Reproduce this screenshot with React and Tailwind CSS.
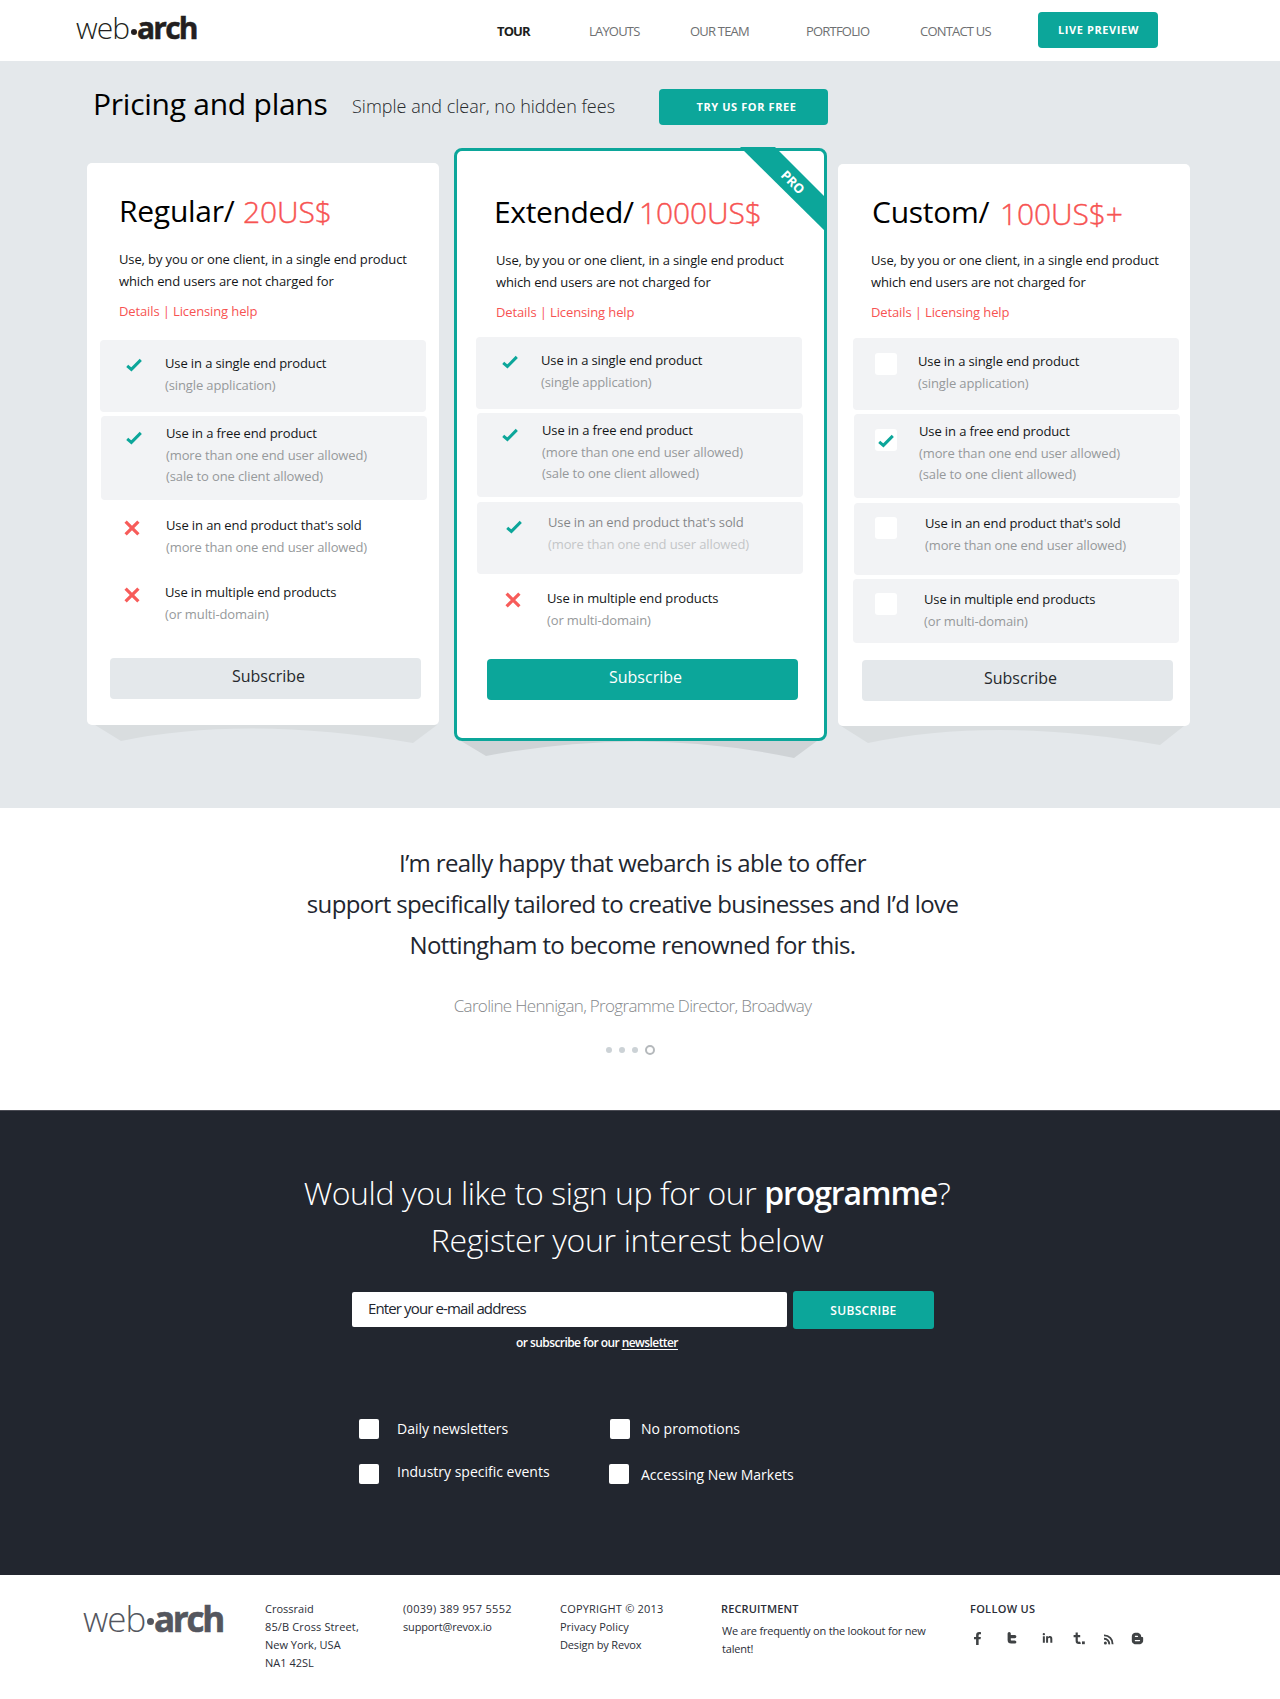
import { FaFacebookF, FaLinkedinIn, FaBloggerB } from "react-icons/fa";

const NAV = ["LAYOUTS", "OUR TEAM", "PORTFOLIO", "CONTACT US"];

const FEATURES = [
  ["Use in a single end product", "(single application)"],
  ["Use in a free end product", "(more than one end user allowed)", "(sale to one client allowed)"],
  ["Use in an end product that's sold", "(more than one end user allowed)"],
  ["Use in multiple end products", "(or multi-domain)"],
];

const PLANS = [
  {
    name: "Regular/",
    price: "20US$",
    card: "mt-4 w-[352px] h-[562px] rounded-[5px] pt-7",
    head: "pl-[32px]",
    title: "w-[124px] tracking-[-0.25px]",
    priceBox: "mt-px",
    desc: "ml-[32px]",
    list: "mt-[18px]",
    rows: [
      { box: "ml-[13px] h-[72px] bg-[#f2f3f5]", icon: "check", at: "w-[65px] pl-[26px] pt-[18px]", text: "pt-3" },
      { box: "ml-[14px] mt-1 h-[84px] bg-[#f2f3f5]", icon: "check", at: "w-[65px] pl-[25px] pt-[15px]", text: "pt-1.5" },
      { box: "ml-[14px] mt-1 h-[67px]", icon: "cross", at: "w-[65px] pl-[23px] pt-4", text: "pt-2.5" },
      { box: "ml-[13px] h-[60px]", icon: "cross", at: "w-[65px] pl-[24px] pt-4", text: "pt-2.5" },
    ],
    button: "ml-[23px] mt-[27px] bg-[#e4e8eb] text-[#26292b]",
    shadow: { cls: "left-0", d: "M8 0 L34 16 Q158 -10 326 18 L350 0 Z", fill: "#d9dddf" },
  },
  {
    name: "Extended/",
    price: "1000US$",
    featured: true,
    card: "ml-[15px] mt-px w-[373px] h-[593px] rounded-[8px] border-3 border-[#0ca69a] pt-[41px]",
    head: "pl-[37px]",
    title: "w-[145px] tracking-[-0.35px]",
    priceBox: "mt-px",
    desc: "ml-[39px]",
    list: "mt-[14px]",
    rows: [
      { box: "ml-[19px] h-[72px] bg-[#f2f3f5]", icon: "check", at: "w-[65px] pl-[26px] pt-[18px]", text: "pt-3" },
      { box: "ml-[20px] mt-1 h-[84px] bg-[#f2f3f5]", icon: "check", at: "w-[65px] pl-[25px] pt-[15px]", text: "pt-1.5" },
      { box: "ml-[20px] mt-[5px] h-[72px] bg-[#f2f3f5]", icon: "check", at: "w-[71px] pl-[29px] pt-[18px]", text: "pt-[9px] opacity-50" },
      { box: "ml-[20px] mt-1 h-[60px]", icon: "cross", at: "w-[70px] pl-[28px] pt-[14px]", text: "pt-[9px]" },
    ],
    button: "ml-[30px] mt-[21px] bg-[#0ca69a] text-white",
    shadow: { cls: "-left-[4px]", d: "M8 3 L33 18 Q190 -12 341 20 L364 3 Z", fill: "#cfd3d6" },
  },
  {
    name: "Custom/",
    price: "100US$+",
    card: "ml-[11px] mt-[17px] w-[352px] h-[562px] rounded-[5px] pt-7",
    head: "pl-[34px]",
    title: "w-[128px] tracking-[-0.25px]",
    priceBox: "mt-0.5",
    desc: "ml-[33px]",
    list: "mt-[15px]",
    rows: [
      { box: "ml-[15px] h-[72px] bg-[#f2f3f5]", icon: "box", at: "w-[65px] pl-[22px] pt-[15px]", text: "pt-3" },
      { box: "ml-[16px] mt-1 h-[84px] bg-[#f2f3f5]", icon: "checkedBox", at: "w-[65px] pl-[21px] pt-[15px]", text: "pt-1.5" },
      { box: "ml-[16px] mt-[5px] h-[72px] bg-[#f2f3f5]", icon: "box", at: "w-[71px] pl-[21px] pt-[14px]", text: "pt-[9px]" },
      { box: "ml-[15px] mt-1 h-[64px] bg-[#f2f3f5]", icon: "box", at: "w-[71px] pl-[22px] pt-[14px]", text: "pt-[9px]" },
    ],
    button: "ml-[24px] mt-[17px] bg-[#e4e8eb] text-[#26292b]",
    shadow: { cls: "left-0", d: "M3 0 L30 17 Q158 -10 322 19 L346 0 Z", fill: "#d9dddf" },
  },
];

function Check() {
  return (
    <svg width="16" height="14" viewBox="0 0 16 14" fill="none">
      <path d="M1.2 7.8 L5.4 11.4 L14.8 1.9" stroke="#0ca69a" strokeWidth="3" />
    </svg>
  );
}

function Cross() {
  return (
    <svg width="16" height="16" viewBox="0 0 16 16" fill="none">
      <path d="M1.6 1.6 L14.4 14.4 M14.4 1.6 L1.6 14.4" stroke="#f75c5a" strokeWidth="3.2" />
    </svg>
  );
}

function Marker({ kind }) {
  if (kind === "check") return <Check />;
  if (kind === "cross") return <Cross />;
  return (
    <div className="h-[22px] w-[22px] rounded-[3px] bg-white pl-[3px] pt-[5px]">
      {kind === "checkedBox" && <Check />}
    </div>
  );
}

function Plan({ plan }) {
  return (
    <article className={`relative shrink-0 bg-white ${plan.card}`}>
      <div className={`flex h-10 text-[30px] leading-10 whitespace-nowrap ${plan.head}`}>
        <h2 className={`shrink-0 text-black ${plan.title}`}>{plan.name}</h2>
        <span className={`font-light tracking-[-0.1px] text-[#f75352] [-webkit-text-stroke:0.4px_#f75352] ${plan.priceBox}`}>{plan.price}</span>
      </div>
      <div className={`text-[13px] leading-[22px] tracking-[-0.12px] whitespace-nowrap ${plan.desc}`}>
        <p className="mt-[17px] text-[#141618]">
          Use, by you or one client, in a single end product
          <br />
          which end users are not charged for
        </p>
        <p className="mt-2 text-[#f75352]">Details | Licensing help</p>
      </div>
      <ul className={plan.list}>
        {plan.rows.map((row, i) => (
          <li key={i} className={`flex w-[326px] rounded-[4px] ${row.box}`}>
            <div className={`shrink-0 ${row.at}`}>
              <Marker kind={row.icon} />
            </div>
            <div className={`text-[13px] leading-[22px] tracking-[-0.12px] whitespace-nowrap text-[#96999b] ${row.text}`}>
              <p className="text-[#141618]">{FEATURES[i][0]}</p>
              <p>{FEATURES[i][1]}</p>
              {FEATURES[i][2] && <p className="-mt-px">{FEATURES[i][2]}</p>}
            </div>
          </li>
        ))}
      </ul>
      <button className={`block h-[41px] w-[311px] rounded-[4px] pb-[5px] pl-1.5 text-base leading-6 ${plan.button}`}>Subscribe</button>
      <svg className={`absolute top-full ${plan.shadow.cls}`} width="374" height="24" viewBox="0 0 374 24">
        <path d={plan.shadow.d} fill={plan.shadow.fill} />
      </svg>
      {plan.featured && (
        <div className="absolute -top-1 -right-[3px] h-[86px] w-[90px] overflow-hidden rounded-tr-[9px]">
          <svg className="absolute inset-0" width="90" height="86" viewBox="0 0 90 86">
            <path d="M3 0 H38 L90 52 V86 Z" fill="#0ca69a" />
          </svg>
          <span className="absolute top-[25px] left-[40px] w-8 rotate-45 text-center text-[13px] leading-5 font-bold text-white">PRO</span>
        </div>
      )}
    </article>
  );
}

function Logo({ web, dot, arch, className }) {
  return (
    <div className={`flex items-baseline leading-10 whitespace-nowrap ${className}`}>
      <span className={`font-light ${web}`}>web</span>
      <span className={`rounded-full bg-current ${dot}`} />
      <span className={`font-bold ${arch}`}>arch</span>
    </div>
  );
}

function Option({ label, className, text }) {
  return (
    <label className={`flex h-5 text-sm leading-5 whitespace-nowrap ${className}`}>
      <span className="h-5 w-5 shrink-0 rounded-[2px] bg-white" />
      <span className={text}>{label}</span>
    </label>
  );
}

export default function App() {
  return (
    <div className="h-[1699px] w-[1280px] overflow-hidden bg-white font-['Open_Sans',sans-serif]">
      <header className="flex h-[61px]">
        <Logo
          className="ml-[76px] mt-2 h-10 w-[421px] text-[30px] text-[#231f20]"
          web="w-[55px] tracking-[-1px]"
          dot="mb-[13px] h-[6px] w-[6px] self-end"
          arch="tracking-[-1.8px] [-webkit-text-stroke:0.5px_#231f20]"
        />
        <nav className="grid grid-cols-[92px_101px_116px_114px_118px] pt-[21px] text-[13px] leading-5 tracking-[-0.8px] whitespace-nowrap text-[#6e7072]">
          <a className="font-bold tracking-[-0.9px] text-[#1c1e20]">TOUR</a>
          {NAV.map((n) => (
            <a key={n}>{n}</a>
          ))}
        </nav>
        <button className="mt-3 h-9 w-[120px] rounded-[4px] bg-[#0ca69a] pl-px text-[11px] leading-9 font-bold tracking-[0.6px] text-white">LIVE PREVIEW</button>
      </header>

      <section className="h-[747px] bg-[#e4e8eb]">
        <div className="flex h-[86px] whitespace-nowrap">
          <h1 className="mt-[23px] ml-[93px] w-[259px] text-[30px] leading-10 tracking-[-0.25px] text-black">Pricing and plans</h1>
          <p className="mt-[33px] w-[307px] text-lg leading-6 font-light text-[#26292b]">Simple and clear, no hidden fees</p>
          <button className="mt-7 h-9 w-[169px] rounded-[4px] bg-[#0ca69a] pl-[6px] text-[11px] leading-9 font-bold tracking-[0.6px] text-white">TRY US FOR FREE</button>
        </div>
        <div className="flex items-start pl-[87px]">
          {PLANS.map((p) => (
            <Plan key={p.name} plan={p} />
          ))}
        </div>
      </section>

      <section className="flex h-[302px] flex-col items-center pt-[34px] pr-[15px] text-center whitespace-nowrap">
        <blockquote className="text-2xl leading-[41px] tracking-[-0.64px] text-[#22262f]">
          I’m really happy that webarch is able to offer
          <br />
          support specifically tailored to creative businesses and I’d love
          <br />
          Nottingham to become renowned for this.
        </blockquote>
        <p className="mt-[29px] text-[17px] leading-6 font-light tracking-[-0.68px] text-[#85888b]">Caroline Hennigan, Programme Director, Broadway</p>
        <div className="mt-[27px] flex items-center pr-[5px]">
          <span className="h-1.5 w-1.5 rounded-full bg-[#ccd2d6]" />
          <span className="ml-[7px] h-1.5 w-1.5 rounded-full bg-[#ccd2d6]" />
          <span className="ml-[7px] h-1.5 w-1.5 rounded-full bg-[#ccd2d6]" />
          <span className="ml-[7px] h-2.5 w-2.5 rounded-full border-2 border-[#b5b9bc]" />
        </div>
      </section>

      <section className="h-[465px] border-t border-[#4a4b54] bg-[#22262f] pt-[59px] whitespace-nowrap text-white">
        <h2 className="pr-[26px] text-center text-[32px] leading-[46px] font-light tracking-[-0.33px]">
          <span className="tracking-[-0.42px]">Would you like to sign up for our </span>
          <b className="font-semibold tracking-[-1.1px]">programme</b>?
          <span className="mt-px block">Register your interest below</span>
        </h2>
        <form className="mt-7 ml-[352px] flex">
          <div className="mt-px h-[35px] w-[435px] rounded-[2px] bg-white pl-4 text-[15px] leading-[33px] tracking-[-0.87px] text-[#22262f]">Enter your e-mail address</div>
          <button type="button" className="ml-1.5 h-[38px] w-[141px] rounded-[3px] bg-[#0ca69a] text-[12px] leading-[37px] font-semibold tracking-[0.3px]">SUBSCRIBE</button>
        </form>
        <p className="mt-[5px] ml-[516px] text-xs leading-[18px] font-semibold tracking-[-0.57px]">
          or subscribe for our <a className="underline underline-offset-2">newsletter</a>
        </p>
        <div className="mt-[67px] ml-[359px] grid grid-cols-[251px_1fr] gap-y-[25px]">
          <Option label="Daily newsletters" text="ml-[18px]" />
          <Option label="No promotions" text="ml-[11px]" />
          <Option label="Industry specific events" text="ml-[18px] -mt-0.5" />
          <Option label="Accessing New Markets" className="-ml-px" text="ml-3 mt-px" />
        </div>
      </section>

      <footer className="grid h-[124px] grid-cols-[182px_138px_157px_161px_249px_1fr] pl-[83px] pt-[25px] text-[11px] leading-[18px] whitespace-nowrap text-[#2b2e37]">
        <Logo
          className="-mt-px h-10 text-[35px] text-[#54565e]"
          web="w-[64px] tracking-[-1px]"
          dot="mb-[14px] h-[7px] w-[7px] self-end"
          arch="tracking-[-2.3px] [-webkit-text-stroke:0.6px_#54565e]"
        />
        <address className="not-italic">
          Crossraid
          <br />
          <span className="tracking-[0.13px]">85/B Cross Street,</span>
          <br />
          New York, USA
          <br />
          NA1 42SL
        </address>
        <div>
          <p className="tracking-[0.3px]">(0039) 389 957 5552</p>
          <p className="tracking-[-0.15px]">support@revox.io</p>
        </div>
        <div>
          <p className="tracking-[0.2px]">COPYRIGHT © 2013</p>
          <p>Privacy Policy</p>
          <p className="tracking-[-0.15px]">Design by Revox</p>
        </div>
        <div>
          <h3 className="font-semibold tracking-[0.15px]">RECRUITMENT</h3>
          <p className="mt-1 ml-px tracking-[-0.2px]">
            We are frequently on the lookout for new
            <br />
            talent!
          </p>
        </div>
        <div>
          <h3 className="font-semibold tracking-[0.3px]">FOLLOW US</h3>
          <div className="mt-[13px] flex h-[15px] items-center text-[#3f4244]">
            <FaFacebookF className="ml-px h-[13px] w-[13px]" />
            <svg className="ml-[22px]" width="12" height="13" viewBox="0 0 12 13" fill="none" stroke="currentColor" strokeWidth="3.2" strokeLinecap="round" strokeLinejoin="round">
              <path d="M3.2 1.6 V8 Q3.2 10 5.2 10 H8.8 M3.2 4.6 H8.8" />
            </svg>
            <FaLinkedinIn className="ml-[24px] h-[11px] w-[11px]" />
            <svg className="ml-[20px]" width="13" height="13" viewBox="0 0 13 13" fill="none" stroke="currentColor" strokeWidth="2.2">
              <path d="M3.7 0.5 V8.8 Q3.7 10.9 5.8 10.9 Q6.8 10.9 7.5 10.5 M0.6 4.2 H7.2" />
              <rect x="9" y="9.4" width="2.8" height="2.8" fill="currentColor" stroke="none" />
            </svg>
            <svg className="ml-[17px]" width="12" height="12" viewBox="0 0 12 12" fill="none" stroke="currentColor" strokeWidth="1.9">
              <circle cx="2.4" cy="10" r="1.5" fill="currentColor" stroke="none" />
              <path d="M1 5.8 A5 5 0 0 1 6.2 11.3 M1 2.4 A8.4 8.4 0 0 1 9.6 11.3" />
            </svg>
            <FaBloggerB className="ml-[16px] h-[13px] w-[13px]" />
          </div>
        </div>
      </footer>
    </div>
  );
}
